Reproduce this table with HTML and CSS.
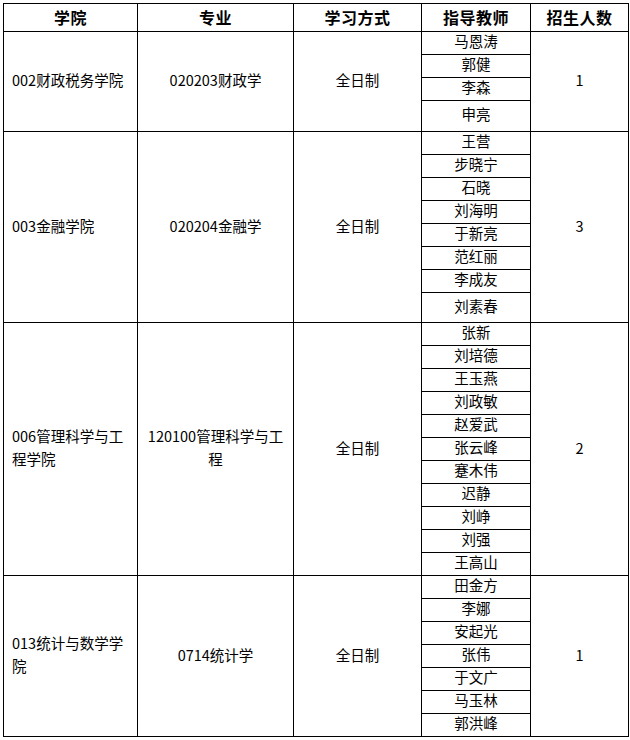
FILE: index.html
```html
<!DOCTYPE html>
<html lang="zh-CN">
<head>
<meta charset="utf-8">
<title>招生导师名单</title>
<link rel="stylesheet" href="styles.css">
</head>
<body>
<table class="roster">
  <colgroup>
    <col class="c-school">
    <col class="c-major">
    <col class="c-mode">
    <col class="c-tutor">
    <col class="c-quota">
  </colgroup>
  <thead>
    <tr class="r-head">
      <th>学院</th>
      <th>专业</th>
      <th>学习方式</th>
      <th>指导教师</th>
      <th>招生人数</th>
    </tr>
  </thead>
  <tbody>
    <tr>
      <td class="grp school" rowspan="4">002财政税务学院</td>
      <td class="grp" rowspan="4">020203财政学</td>
      <td class="grp" rowspan="4">全日制</td>
      <td>马恩涛</td>
      <td class="grp" rowspan="4">1</td>
    </tr>
    <tr><td>郭健</td></tr>
    <tr><td>李森</td></tr>
    <tr class="r-tall"><td>申亮</td></tr>

    <tr>
      <td class="grp school" rowspan="8">003金融学院</td>
      <td class="grp" rowspan="8">020204金融学</td>
      <td class="grp" rowspan="8">全日制</td>
      <td>王营</td>
      <td class="grp" rowspan="8">3</td>
    </tr>
    <tr><td>步晓宁</td></tr>
    <tr><td>石晓</td></tr>
    <tr><td>刘海明</td></tr>
    <tr><td>于新亮</td></tr>
    <tr><td>范红丽</td></tr>
    <tr><td>李成友</td></tr>
    <tr class="r-tall2"><td>刘素春</td></tr>

    <tr class="r-short">
      <td class="grp school" rowspan="11">006管理科学与工程学院</td>
      <td class="grp" rowspan="11">120100管理科学与工程</td>
      <td class="grp" rowspan="11">全日制</td>
      <td>张新</td>
      <td class="grp" rowspan="11">2</td>
    </tr>
    <tr><td>刘培德</td></tr>
    <tr><td>王玉燕</td></tr>
    <tr><td>刘政敏</td></tr>
    <tr><td>赵爱武</td></tr>
    <tr><td>张云峰</td></tr>
    <tr><td>蹇木伟</td></tr>
    <tr><td>迟静</td></tr>
    <tr><td>刘峥</td></tr>
    <tr><td>刘强</td></tr>
    <tr><td>王高山</td></tr>

    <tr>
      <td class="grp school" rowspan="7">013统计与数学学院</td>
      <td class="grp" rowspan="7">0714统计学</td>
      <td class="grp" rowspan="7">全日制</td>
      <td>田金方</td>
      <td class="grp" rowspan="7">1</td>
    </tr>
    <tr><td>李娜</td></tr>
    <tr><td>安起光</td></tr>
    <tr><td>张伟</td></tr>
    <tr><td>于文广</td></tr>
    <tr><td>马玉林</td></tr>
    <tr><td>郭洪峰</td></tr>
  </tbody>
</table>
</body>
</html>
```

FILE: styles.css
```css
html, body {
  margin: 0;
  padding: 0;
  background: #ffffff;
}

body {
  font-family: "Noto Sans CJK SC", "Liberation Sans", sans-serif;
  color: #000000;
}

.roster {
  margin: 3px 0 0 3px;
  border-collapse: collapse;
  table-layout: fixed;
  width: 625px;
  font-size: 14.5px;
}

.c-school { width: 134px; }
.c-major  { width: 156px; }
.c-mode   { width: 128px; }
.c-tutor  { width: 109px; }
.c-quota  { width: 98px; }

.roster th,
.roster td {
  border: 1px solid #000000;
  text-align: center;
  vertical-align: middle;
  font-weight: normal;
}

.roster th {
  padding: 0 5px 2px;
  font-size: 16px;
  line-height: 22px;
  font-weight: bold;
  letter-spacing: 0.5px;
}

.roster td {
  padding: 0 5px 4px;
  line-height: 18px;
}

.roster td.grp {
  line-height: 23px;
}

.roster td.school {
  text-align: left;
  padding-left: 8px;
  padding-right: 7px;
}

.roster tr { height: 23px; }
.roster tr.r-head { height: 28px; }
.roster tr.r-tall { height: 31px; }
.roster tr.r-tall2 { height: 30px; }
.roster tr.r-short { height: 22px; }
```
